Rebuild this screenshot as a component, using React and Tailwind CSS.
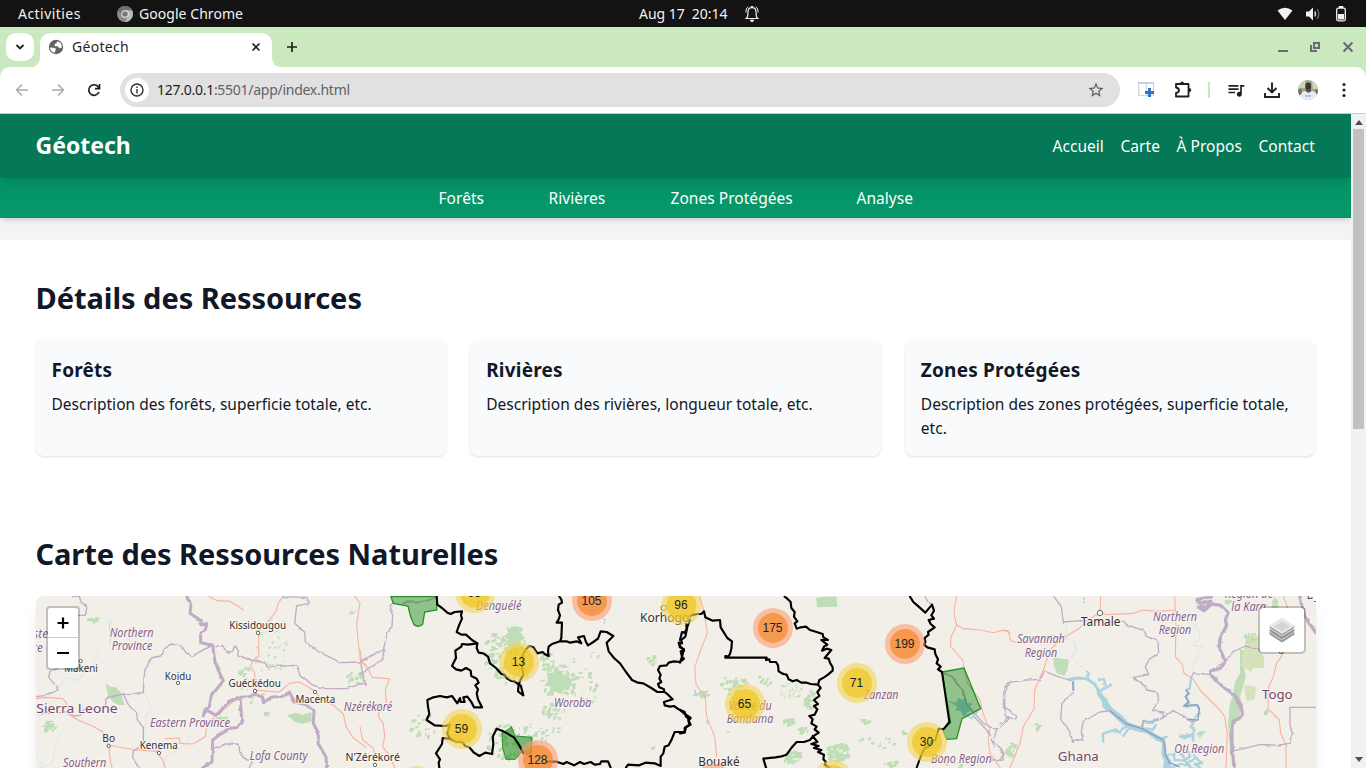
import React from "react";
import { MdStarBorder, MdQueueMusic } from "react-icons/md";

const Stroke = ({ d, c, w, o = 1, f = "none", rough = false }) => (
  <path d={d} stroke={c} strokeWidth={w} opacity={o} fill={f} strokeLinejoin="round" strokeLinecap="round" filter={rough ? "url(#rough)" : undefined} />
);

function TopBar() {
  return (
    <div className="flex h-[27px] shrink-0 items-center bg-[#131313] text-[14px] text-[#f2f2f2]">
      <span className="ml-[18px] w-[63px] whitespace-nowrap tracking-[0.450px]">Activities</span>
      <svg className="ml-[36px]" width="16" height="16" viewBox="0 0 16 16">
        <circle cx="8" cy="8" r="8" fill="#8b8b8b" />
        <path d="M8 4.2H15A8 8 0 0 1 8 16L11.3 9.9Z" fill="#b9b9b9" />
        <path d="M1.1 4A8 8 0 0 1 15 4.2H8L4.7 9.9Z" fill="#6f6f6f" />
        <circle cx="8" cy="8" r="3.8" fill="#eee" />
        <circle cx="8" cy="8" r="2.8" fill="#777" />
      </svg>
      <span className="ml-[6px] w-[106px] whitespace-nowrap tracking-[0.050px]">Google Chrome</span>
      <span className="ml-[394px] w-[90px] whitespace-pre tracking-[-0.040px]">Aug 17  20:14</span>
      <svg className="ml-[15px]" width="16" height="18" viewBox="0 0 16 18" fill="none" stroke="#eee">
        <path d="M2.3 13.5C4.5 12 3.7 9 4 6.5C4.2 4 5.5 2.7 8 2.7S11.800 4 12 6.500C12.300 9 11.500 12 13.700 13.500Z" strokeWidth="1.200" />
        <path d="M2 7.500C1.800 4.800 2.600 2.900 4.200 1.700M14 7.500C14.200 4.800 13.400 2.900 11.800 1.700M7 2.500V1.500H9V2.500" strokeWidth="1" />
        <path d="M6.500 15H9.500L9 16.500H7Z" fill="#eee" />
      </svg>
      <svg className="ml-[517px]" width="16" height="16" viewBox="0 0 16 16" fill="#f2f2f2">
        <path d="M.5 4.500Q8 -1 15.500 4.500L8 14Z" />
      </svg>
      <svg className="ml-[12px]" width="16" height="16" viewBox="0 0 16 16">
        <path d="M1 5.500H4L8 1.500V14.500L4 10.500H1Z" fill="#f2f2f2" />
        <path d="M9.700 5.500Q11.500 8 9.700 10.500" fill="none" stroke="#ddd" strokeWidth="1.300" />
        <path d="M12 3Q15.700 8 12 13" fill="none" stroke="#777" strokeWidth="1.200" />
      </svg>
      <svg className="ml-[13px]" width="16" height="16" viewBox="0 0 16 16">
        <rect x="2.700" y="2.200" width="8.600" height="12.600" rx="1.500" fill="none" stroke="#f2f2f2" strokeWidth="1.300" />
        <rect x="4.800" y="0" width="4.500" height="2" fill="#f2f2f2" />
        <rect x="4" y="8" width="6" height="5.500" fill="#f2f2f2" />
      </svg>
    </div>
  );
}

function TabStrip() {
  return (
    <div className="flex h-10 shrink-0 bg-[#cae9be]">
      <div className="ml-[6px] mt-[6px] flex h-7 w-7 items-center justify-center rounded-[10px] bg-white">
        <svg width="10" height="8" viewBox="0 0 10 8" fill="none" stroke="#1f1f1f" strokeWidth="1.800"><path d="M1.500 2L5 5.500L8.500 2" /></svg>
      </div>
      <svg className="mt-auto" width="6" height="10" viewBox="0 0 6 10"><path d="M6 0Q6 7 0 10H6Z" fill="#fff" /></svg>
      <div className="mt-[6px] flex h-[34px] w-[232px] items-center rounded-t-[10px] bg-white pb-[6px] pl-2 text-[14px] text-[#1f1f1f]">
        <svg width="16" height="16" viewBox="0 0 16 16">
          <circle cx="8" cy="8" r="7.200" fill="#5f6368" />
          <path d="M1.900 8.500L5.500 8.800L7.800 9.400L7.600 11.300L6.500 13.700Q2.300 12.500 1.900 8.500ZM9.500 2.300L8.300 4.300L6.600 4.900L6.800 7.200L10.100 7.300L11.100 9.200L13.900 8.400Q14.200 3.800 9.500 2.300Z" fill="#fff" />
        </svg>
        <span className="relative -top-px ml-2 w-[57px] whitespace-nowrap tracking-[0.300px]">Géotech</span>
        <svg className="ml-[122px]" width="10" height="10" viewBox="0 0 10 10" stroke="#1f1f1f" strokeWidth="1.600"><path d="M1.500 1.500L8.500 8.500M8.500 1.500L1.500 8.500" /></svg>
      </div>
      <svg className="mt-auto" width="10" height="10" viewBox="0 0 10 10"><path d="M0 0Q0 10 10 10H0Z" fill="#fff" /></svg>
      <svg className="ml-[4px] mt-[14px]" width="12" height="12" viewBox="0 0 12 12" stroke="#1f1f1f" strokeWidth="1.700"><path d="M6 1V11M1 6H11" /></svg>
      <svg className="ml-auto mr-[7px] mt-[14px]" width="84" height="14" viewBox="0 0 84 14" fill="none" stroke="#6b6870">
        <path d="M3 10H13" strokeWidth="2" />
        <rect x="39" y="2" width="5" height="5" strokeWidth="2" />
        <path d="M36 4V10H42" strokeWidth="2" />
        <path d="M68.500 1.500L77.500 10.500M77.500 1.500L68.500 10.500" strokeWidth="2" />
      </svg>
    </div>
  );
}

function Toolbar() {
  return (
    <div className="h-[47px] shrink-0 bg-[#cae9be]">
      <div className="flex h-full items-center rounded-t-[10px] border-b border-[#c9ccce] bg-white">
        <svg className="ml-[15px]" width="14" height="14" viewBox="0 0 14 14" fill="none" stroke="#a9a9a9" strokeWidth="1.500"><path d="M13 7H2M7 1.500L1.500 7L7 12.500" /></svg>
        <svg className="ml-[22px]" width="14" height="14" viewBox="0 0 14 14" fill="none" stroke="#a9a9a9" strokeWidth="1.500"><path d="M1 7H12M7 1.500L12.500 7L7 12.500" /></svg>
        <svg className="ml-[22px]" width="14" height="14" viewBox="0 0 14 14" fill="none" stroke="#1f1f1f" strokeWidth="1.700"><path d="M12 9A5.300 5.300 0 1 1 11.200 3.700L12.300 5.300M12.500 1V5.700H8" /></svg>
        <div className="ml-[19px] flex h-[34px] w-[1000px] items-center rounded-full bg-[#e1e1e1] pl-[5px] pr-[15px]">
          <div className="flex h-6 w-6 items-center justify-center rounded-full bg-white">
            <svg width="14" height="14" viewBox="0 0 14 14"><circle cx="7" cy="7" r="6" fill="none" stroke="#303030" strokeWidth="1.400" /><path d="M6.300 3.500H7.700V5H6.300ZM6.300 6H7.700V10.500H6.300Z" fill="#303030" /></svg>
          </div>
          <span className="relative -top-px ml-2 whitespace-nowrap text-[14px] tracking-[-0.270px] text-[#5f6368]"><span className="text-[#1f1f1f]">127.0.0.1</span>:5501/app/index.html</span>
          <MdStarBorder className="ml-auto text-[#5f5f5f]" size={18} />
        </div>
        <svg className="ml-[18px]" width="18" height="18" viewBox="0 0 18 18">
          <path d="M.7 2.500V14.500H15.500V2.500M8.500 3V14.500" fill="none" stroke="#d3d3d6" strokeWidth="1.200" />
          <path d="M0 2H16" stroke="#b9c3e0" strokeWidth="1.600" />
          <path d="M11.500 7V16M7 11.500H16" stroke="#2d75bf" strokeWidth="3" />
        </svg>
        <svg className="ml-[18px]" width="18" height="18" viewBox="0 0 18 18">
          <path d="M2 3H14.500V15.500H2V12Q5 11.500 5 9.300T2 6.500Z" fill="none" stroke="#1f1f1f" strokeWidth="1.800" strokeLinejoin="round" />
          <path d="M6 3Q6 .5 8 .5T10 3ZM15 7Q17.300 7 17.300 9T15 11Z" fill="#1f1f1f" />
        </svg>
        <div className="ml-[16px] h-4 w-[2px] bg-[#c9e8bd]" />
        <MdQueueMusic className="ml-[16px] text-[#1f1f1f]" size={20} />
        <svg className="ml-[17px]" width="18" height="18" viewBox="0 0 18 18" fill="none" stroke="#1f1f1f" strokeWidth="1.900"><path d="M9 1.500V11M4.500 7L9 11.500L13.500 7M2 12V16H16V12" /></svg>
        <svg className="ml-[17px]" width="20" height="20" viewBox="0 0 20 20">
          <defs><clipPath id="av"><circle cx="10" cy="10" r="10" /></clipPath></defs>
          <g clipPath="url(#av)">
            <rect width="20" height="20" fill="#9dab84" />
            <path d="M0 0H7V8H0ZM14 2H20V9H15Z" fill="#cbd5bc" />
            <path d="M2 14Q5 10 10 11.500Q15 10 18 13L19 20H1Z" fill="#e2ecf6" />
            <rect x="7.500" y="2.500" width="5.500" height="8" rx="2.700" fill="#403334" />
            <path d="M8 9H12.500L13.500 11L10.500 13L7.500 11Z" fill="#5d4b4a" />
            <path d="M0 10L3 9L4 13L1 16ZM17 9L20 10V14L18 13Z" fill="#7b685c" />
            <path d="M7 16H13" stroke="#8296b8" strokeWidth="1" />
          </g>
        </svg>
        <svg className="ml-[24px]" width="4" height="16" viewBox="0 0 4 16" fill="#1f1f1f"><circle cx="2" cy="2.500" r="1.600" /><circle cx="2" cy="8" r="1.600" /><circle cx="2" cy="13.500" r="1.600" /></svg>
      </div>
    </div>
  );
}

const PURPLE = "#c0acc4";
const GREEN = "#bfdeb7";
const ROAD = "#fab29e";
const WATER = "#aad3df";

const Label = ({ x, y, s = 36, kind = "region", w, children }) => (
  <text
    x={x}
    y={y}
    fontSize={s}
    textAnchor="middle"
    textLength={w}
    lengthAdjust="spacingAndGlyphs"
    fontStyle={kind === "region" ? "italic" : "normal"}
    fill={kind === "town" ? "#303030" : kind === "country" ? "#71476f" : "#855f8b"}
    stroke="#f8f5f1"
    strokeWidth="6"
    strokeLinejoin="round"
    paintOrder="stroke"
  >
    {children}
  </text>
);
const Town = ({ x, y, r = 5 }) => <circle cx={x} cy={y} r={r} fill="#fff" stroke="#6a665f" strokeWidth="3" />;

/* Repeatable speckle of small woodland patches inside an ellipse. */
function Woods({ x, y, rx, ry, n, s = 7, seed = 1 }) {
  let v = seed * 791947 + 1234567;
  const rnd = () => ((v = (v * 16807) % 2147483647) / 2147483647);
  rnd();
  let d = "";
  for (let i = 0; i < n; i++) {
    const a = rnd() * 6.283, q = Math.sqrt(rnd());
    const px = x + Math.cos(a) * q * rx, py = y + Math.sin(a) * q * ry;
    const w = s * (0.4 + rnd()), h = s * (0.3 + rnd());
    d += `M${px.toFixed(0)} ${py.toFixed(0)}h${w.toFixed(0)}v${h.toFixed(0)}h${(-w / 2).toFixed(0)}v${(h / 2).toFixed(0)}h${(-w).toFixed(0)}v${(-h).toFixed(0)}z`;
  }
  return <path d={d} fill={GREEN} />;
}

function West() {
  return (
    <g transform="translate(0 -6) scale(.33333)">
      <path d="M210 280L222 290L240 292L256 310L266 345L250 346L234 338L218 322L212 300Z" fill={GREEN} />
      <path d="M752 376L780 368L800 374L826 366L828 394L800 402L778 396Z" fill={GREEN} />
      <path d="M684 366H700V379H684Z" fill={GREEN} />
      <Woods x={172} y={86} rx={16} ry={6} n={8} />
      <Woods x={40} y={406} rx={18} ry={16} n={34} s={6} seed={4} />
      <Woods x={700} y={170} rx={55} ry={85} n={60} s={4} seed={5} />
      <Woods x={625} y={240} rx={18} ry={12} n={12} seed={6} s={6} />
      <Woods x={560} y={384} rx={22} ry={10} n={14} s={7} seed={8} />
      <Woods x={640} y={295} rx={45} ry={45} n={12} s={6} seed={18} />
      <Woods x={960} y={260} rx={28} ry={18} n={18} s={7} seed={9} />
      <Woods x={955} y={65} rx={25} ry={8} n={8} s={5} seed={10} />
      <Stroke d="M190 180L175 215L150 245L130 270L90 262L65 300M150 245L90 300M328 310L345 350L330 380L325 430M470 430L440 470L390 500L380 533M100 400L70 430L48 520L15 533M0 505L22 525L16 533" c="#d6e5e8" w={2.500} />
      <Stroke d="M224 92L220 115L226 138L221 160" c="#bcdce6" w={3} />
      <Stroke d="M520 20L545 32L580 34L605 48L622 60M740 20L726 42L720 64L705 84L690 100L668 125L668 200L650 212L644 230L656 250L657 300L700 304L730 306L760 280L790 276L836 302L850 320L895 348L922 372L930 410L952 444L991 472M0 326L30 322L80 326L92 340L95 372L130 392L170 408L200 425L218 466L300 480L360 484L380 510L388 533M218 466L222 505L228 533M300 480L348 474L370 484M388 446L430 444L432 460L470 462L508 440L512 408L534 380L575 350L604 322M957 20L972 40L962 100L966 150L974 215L990 225" c={ROAD} w={3.300} />
      <Stroke d="M110 20L130 18L134 38L150 44L152 55L148 76H130M64 236L42 244L38 262L54 280L66 300L32 316L0 320M208 344L216 322L262 312L322 308L326 242L346 204L374 198L386 176L404 162L428 166L468 200L498 182L530 164M262 312L280 350L300 366L310 400L322 412V462L292 484L290 504L308 533M540 170L560 166L570 186L590 184L595 168L608 182L605 196L648 210L690 220L696 230L780 226L795 260L830 285L870 296L930 296L990 278M740 20L812 22L820 40L782 48L776 100L806 126L808 156L850 186L914 218L974 216L990 206M530 476L570 462L606 462L608 486L630 510L650 512L640 533M0 368L20 372L50 364L98 366L112 378L130 376L150 350" c={PURPLE} w={4} rough />
      <Stroke d="M452 20L466 40L462 70L480 82L494 92L496 105L512 100L508 120L494 134V158L530 166L538 222L562 272L526 318L520 350L506 360L502 378L512 360L540 376L576 338L612 322L618 398L606 412L576 416L530 450L528 516L500 533M604 322L640 320L662 312L680 322L682 338L706 322L750 318L760 306L776 336L810 344L834 360L832 400L848 430L846 460L870 500L872 533" c={PURPLE} w={9} rough />
      <Label x={14} y={144}>ste</Label><Label x={4} y={185}>ce</Label>
      <Label x={287} y={141} w={132}>Northern</Label><Label x={288} y={180} w={122}>Province</Label>
      <Label x={462} y={412} w={240}>Eastern Province</Label><Label x={146} y={530} w={130}>Southern</Label>
      <Label x={728} y={511} w={174}>Lofa County</Label>
      <Label x={123} y={369} s={40} kind="country" w={244}>Sierra Leone</Label>
      <Label x={665} y={117} s={32} kind="town" w={170}>Kissidougou</Label><Town x={666} y={129} />
      <Label x={135} y={246} s={32} kind="town" w={101}>Makeni</Label><Town x={134} y={213} />
      <Label x={426} y={269} s={32} kind="town" w={79}>Koidu</Label><Town x={426} y={279} />
      <Label x={656} y={291} s={32} kind="town" w={157}>Guéckédou</Label><Town x={657} y={303} />
      <Label x={838} y={340} s={32} kind="town" w={119}>Macenta</Label><Town x={837} y={306} />
      <Label x={218} y={457} s={32} kind="town" w={38}>Bo</Label><Town x={218} y={468} />
      <Label x={368} y={476} s={32} kind="town" w={114}>Kenema</Label><Town x={369} y={489} />
    </g>
  );
}

function Centre() {
  return (
    <g transform="translate(324 -6) scale(.33333)">
      <path d="M440 108L450 118L462 108L478 112L476 128L490 140L480 158L486 176L466 170L450 180L442 164L446 146L430 140L444 130ZM560 250L580 248L584 238L600 240L612 258L630 262L636 280L626 296L610 300L602 312L584 304L570 306L572 290L556 286L564 270Z" fill={GREEN} />
      <Woods x={458} y={145} rx={38} ry={42} n={45} seed={2} />
      <Woods x={410} y={185} rx={40} ry={60} n={46} seed={3} />
      <Woods x={450} y={250} rx={50} ry={32} n={22} seed={23} />
      <Woods x={595} y={270} rx={50} ry={52} n={75} seed={4} />
      <Woods x={560} y={215} rx={28} ry={28} n={24} seed={14} />
      <Woods x={670} y={290} rx={42} ry={56} n={22} seed={5} />
      <Woods x={585} y={352} rx={42} ry={32} n={28} seed={6} />
      <Woods x={440} y={450} rx={65} ry={55} n={45} seed={7} />
      <Woods x={530} y={425} rx={70} ry={38} n={26} seed={17} />
      <Woods x={190} y={400} rx={38} ry={52} n={16} seed={8} />
      <Woods x={876} y={206} rx={14} ry={14} n={10} seed={9} />
      <Woods x={880} y={470} rx={8} ry={4} n={4} seed={10} />
      <Woods x={690} y={220} rx={55} ry={40} n={7} seed={15} />
      <Stroke d="M730 88h8M733 92v10" c={WATER} w={3} />
      <Stroke d="M100 38L90 48L98 70L96 110L82 130L76 154L70 180L30 200L2 214L6 240L14 270L18 284M74 180L68 206L30 235L5 246M125 46L140 36L190 36L230 22" c={PURPLE} w={4} rough />
      <Stroke d="M0 180L6 215L26 238L36 262L88 266L76 300L80 342L58 350L56 382L70 400L74 440L68 470L90 500L104 533M0 410L8 450L40 474L46 520" c={ROAD} w={3.300} />
      <Label x={416} y={60} w={136}>Denguélé</Label>
      <Label x={638} y={352} w={112}>Woroba</Label>
      <Label x={24} y={362} w={146}>Nzérékoré</Label>
      <Label x={38} y={513} s={32} kind="town" w={163}>N'Zérékoré</Label><Town x={45} y={525} />
      <Label x={914} y={97} s={36} kind="town" w={148}>Korhogo</Label><Town x={911} y={54} r={8} />
      <path d="M93 20L100 40L144 48L152 80L162 104Q176 114 188 103L194 66L230 60V20Z" fill="#008000" fillOpacity=".4" stroke="#269326" strokeWidth="4" />
      <path d="M426 428L442 420L454 410L466 438L516 442L514 490L500 494L490 480L466 508L438 508L428 474Z" fill="#008000" fillOpacity=".5" stroke="#269326" strokeWidth="3" />
      <Stroke d="M230 20L232 44L246 54L262 68L272 72L284 66L306 64L303 76L306 86L298 104L290 126L304 134L318 134L336 150L352 160L350 174L356 188L370 190L384 200L390 220L408 234L424 252L434 254L440 264L452 272L464 274L476 284L482 268L490 256L486 230L490 214L486 200L498 178L508 168L520 172L532 190L548 186L554 192L566 198L564 184L566 170L576 162L600 154M476 284L474 304L490 316L482 286M600 154L604 144L606 98L590 98L596 88L600 76L594 60L596 44L606 38L604 28L598 20M600 154L620 154L630 158L650 154L664 160L654 142L672 138L678 156L684 166L700 156L714 146L722 124L740 126L760 138L740 158L746 184L762 204L780 220L798 246L816 270L834 278L850 280L874 294L892 306H914L924 314L938 328L912 336L914 346L930 350L942 348L956 358L974 366L978 380L984 384L988 404L974 414V426L944 426L936 446L926 466L914 470L910 490L902 500V528L884 520L856 518L838 526L804 524L798 533" c="#000" w={6.500} />
      <Stroke d="M990 90L982 110L976 140L964 150L966 160L956 158L960 172L972 178L966 200L972 206L960 216L942 214L926 218L920 226L900 228L894 240L902 254L898 266L904 276L894 282L898 292L912 298V306M352 160L324 164L306 162L304 170L286 182L288 204L276 228L288 238L304 242L318 234L332 242L334 258L350 266L356 278L346 286L354 298L350 310L354 328L366 352H342L334 336L322 320L310 322L314 336L302 336L300 324L292 340L276 318L260 322L240 318L220 322L202 330L204 350L208 372L200 390L224 406L256 408L270 404L262 430L270 446L290 456H306L316 468L328 472L342 488L358 498L376 488L396 492L400 462L398 440L410 416L430 424L462 442L478 466L490 490M268 446L248 444L246 462L228 490L240 508L236 518L238 533M560 515L590 515L610 522L620 516L642 526L660 516L672 522L692 516L704 524L720 522L724 514L744 514L752 533" c="#000" w={6.500} />
    </g>
  );
}

function East() {
  return (
    <g transform="translate(644 -6) scale(.33333)">
      <path d="M408 24L430 20H470L472 50L412 52Z" fill={GREEN} />
      <Woods x={175} y={275} rx={28} ry={14} n={24} seed={1} />
      <Woods x={70} y={306} rx={14} ry={14} n={14} seed={2} />
      <Woods x={150} y={290} rx={30} ry={20} n={9} seed={3} />
      <Woods x={250} y={270} rx={22} ry={20} n={9} seed={4} />
      <Woods x={330} y={300} rx={38} ry={25} n={60} s={3} seed={5} />
      <Woods x={390} y={325} rx={18} ry={28} n={24} seed={6} />
      <Woods x={325} y={390} rx={16} ry={10} n={16} seed={7} />
      <Woods x={370} y={415} rx={14} ry={10} n={10} seed={8} />
      <Woods x={335} y={498} rx={28} ry={18} n={45} seed={9} />
      <Woods x={475} y={485} rx={36} ry={28} n={85} seed={10} />
      <Woods x={552} y={390} rx={14} ry={5} n={7} seed={11} />
      <Woods x={590} y={458} rx={70} ry={20} n={14} s={6} seed={12} />
      <Woods x={670} y={425} rx={10} ry={5} n={5} seed={13} />
      <Woods x={640} y={520} rx={28} ry={8} n={10} seed={14} />
      <Woods x={840} y={520} rx={50} ry={12} n={14} seed={15} />
      <Woods x={120} y={320} rx={70} ry={120} n={9} s={6} seed={16} />
      <Stroke d="M60 20L72 66L82 130L62 180L44 232L48 284L76 322L80 380L104 440L110 500M830 20L822 60L824 82L830 104L812 144V170L848 210L854 244L862 280L900 330L908 365L920 400L930 414L924 450L930 490L960 533M830 104L850 116L900 120L940 128L970 120L990 128" c={ROAD} w={3.300} />
      <Stroke d="M735 20L748 38L758 44M786 246L816 260L830 280L850 302L858 340L884 370L910 400L928 410L950 418L940 455L960 470L972 490L966 510L932 514M950 418L990 386M990 386L975 378L974 310L990 274M878 376L920 420L944 470" c={PURPLE} w={4} rough />
      <Stroke d="M44 302L50 316L42 316M856 372L876 386L892 366" c={WATER} w={5} />
      <Label x={210} y={359} w={130}>Vallée du</Label><Label x={210} y={398} w={140}>Bandama</Label>
      <Label x={603} y={328} w={104}>Zanzan</Label><Label x={844} y={518} w={182}>Bono Region</Label>
      <Label x={117} y={527} s={36} kind="town" w={124}>Bouaké</Label>
      <path d="M786 246L852 234L902 356L846 386L830 446L800 448L788 420L812 398Z" fill="#008000" fillOpacity=".4" stroke="#269326" strokeWidth="4" />
      <path d="M804 332L828 338L836 324L850 330L856 318L862 338L880 342L866 350L874 362L860 368L850 380L842 362L826 362L832 350Z" fill="#4f9e86" opacity=".75" />
      <Stroke d="M786 246L816 260L830 280L850 302L858 340L884 370" c="#648a68" w={4} o={0.700} />
      <Stroke d="M0 150L6 126L14 128L20 116L18 96L32 76L52 72L64 72L72 64L76 82L98 92L120 90L122 112L142 144L156 154L154 176L150 192L144 200L136 198V203H260L258 210L268 208L270 216H288L294 226L296 244L310 252L320 254L326 268L338 274L350 270L364 278L380 278L392 282L414 284L418 270L432 262L444 254L458 242V232L450 218L446 206L434 204L454 180L440 176L426 182L432 170L442 164L424 150L444 150L430 142L428 132L410 126L390 120L378 110L362 112L350 116L344 100L352 94L342 80L344 66L334 54L332 36L322 26L314 20M0 168L12 182L2 184L6 200L0 218M0 360L12 370L32 384L26 392L32 404L18 412L14 428L0 430M414 284L422 294L412 306L418 318L402 330L414 342L402 348L412 358L404 374L388 378L398 388L394 400L410 410L404 418L416 428L398 440L390 450L372 456L350 456L334 474L320 494L300 500L286 502L250 506L258 533M398 438L412 456L394 462L416 468L402 474L424 480L414 486L432 494L430 508L438 516L434 524L448 533" c="#000" w={6.500} />
      <Stroke d="M690 20L700 36L716 50L736 68L756 44L762 62L754 76L762 86L746 90L752 102L764 112L744 126L746 134L734 144L736 156L732 164L742 172L764 178L766 192L774 208L770 220L782 230L774 238L786 246" c="#000" w={6.500} />
      <Stroke d="M786 246L808 396L790 418L776 416L766 450L754 454L748 470L734 474L722 500L710 533" c="#000" w={6} />
    </g>
  );
}

function FarEast() {
  return (
    <g transform="translate(964 -6) scale(.33333)">
      <path d="M160 200L184 206L206 208L204 234L194 258L170 250L162 228ZM720 180L730 180L732 230L738 260L720 320L730 352L704 404L684 398L690 340L700 310L704 278L720 250ZM684 400H702V480H690Z" fill={GREEN} />
      <path d="M740 140L778 136V180L792 200V234L762 234L752 246L724 226L730 180ZM732 286L768 290L764 330L740 332Z" fill="#d8e2ba" />
      <Woods x={750} y={135} rx={18} ry={22} n={14} seed={2} />
      <Woods x={825} y={38} rx={6} ry={16} n={18} seed={3} />
      <Woods x={680} y={30} rx={10} ry={5} n={7} seed={4} />
      <Woods x={108} y={406} rx={10} ry={8} n={7} seed={5} />
      <Woods x={34} y={475} rx={18} ry={20} n={20} seed={6} />
      <Woods x={600} y={430} rx={12} ry={12} n={9} s={6} seed={7} />
      <Woods x={798} y={360} rx={4} ry={4} n={4} seed={8} />
      <Stroke d="M200 110L194 140L222 160L230 185L214 200L244 232L262 250M590 94L584 110L600 130L596 150L580 166L608 172L590 190L592 208L580 220L580 250" c="#d4e5ea" w={3} rough />
      <Stroke d="M302 20L300 68L258 92L240 114L186 146L150 180L132 235L104 300L102 356L70 410L60 460L30 533M300 68L320 74L400 70L430 60L466 64L526 60M524 20L528 100L526 200L546 222L552 250L580 268L600 300L660 360L674 380L682 430L678 533M0 122H24L32 152L60 160L150 135L180 140M850 20L862 50L850 190L830 220L820 260L806 290L804 356L838 390L842 430L858 466V533" c={ROAD} w={3.300} />
      <Stroke d="M208 268L230 264L260 266L284 282L300 308L320 340L350 376" c={WATER} w={9} />
      <path d="M290 296L304 312L320 326L332 350L350 364L366 376L384 396L410 406L440 414L462 430L490 444L498 462L500 494L514 512L512 540H488L492 510L484 490L486 460L462 446L440 430L408 424L376 412L350 388L330 368L308 352L304 332L290 312Z" fill={WATER} />
      <Stroke d="M300 304L322 292L334 284M318 292L312 268L300 268M322 292L308 284M262 246L264 268M220 272V300M374 410L360 426L332 420L308 436L310 456M344 426L360 432M390 410L370 438M424 412L430 396L458 400L462 390M440 416L458 420L468 402M490 500L520 490L524 510L560 512L540 490M500 440L470 450M510 533L544 522L580 533M580 400L572 410L584 420L572 434L540 440L556 444L580 436V452M562 480L570 500L552 510L572 530M580 470L584 500L606 520L584 522L600 533M590 505L560 520M574 262L570 290L558 304L568 310L558 320L566 336L552 348L594 346L596 370L580 390L566 388" c={WATER} w={7} rough />
      <Stroke d="M558 300L566 310L556 320L566 336L552 348L590 344L598 354L594 390L565 388M218 276L220 300M330 362L352 380L380 402L426 416L470 440L492 452L496 494L508 518L538 530" c="#8e9bbb" w={4} />
      <Stroke d="M162 20L184 50L190 96L240 92L372 94L380 104L430 122L440 140L474 152L476 188L448 208L436 230L446 254L400 262L436 286L440 300L472 306L476 330L458 362L488 366L490 382L462 394L430 394L428 412M490 382L520 362L560 384L574 396L592 390M574 262L580 248L632 254M632 240L672 218L700 184L740 168L778 180M0 402L24 380L46 390L50 378L30 364L10 345L12 290L24 278L80 270L120 268L134 244L180 262L210 272M220 308L186 340L182 388L212 428L218 456L248 448L244 424L250 394L300 366L330 362M876 430L868 460L830 466L800 464L780 464L704 482M0 480L10 490L0 512" c={PURPLE} w={4} rough />
      <Stroke d="M948 352H870V402L876 430" c={PURPLE} w={4} />
      <Stroke d="M634 20L594 28L602 42L630 34L622 50L596 52L612 62L636 42L662 46L684 68L676 90L680 106L660 146L658 170L668 196L674 216L664 234L636 242L632 252L650 276L704 316L720 344L730 376L696 400L694 440L702 533M900 20L906 50L914 80L948 128" c={PURPLE} w={10} rough />
      <Stroke d="M252 24v3M252 34v3" c="#8ccbe5" w={4} />
      <Town x={300} y={69} r={8} /><Town x={843} y={186} />
      <Label x={302} y={109} s={36} kind="town" w={118}>Tamale</Label>
      <Label x={123} y={160} w={143}>Savannah</Label><Label x={123} y={200} w={98}>Region</Label>
      <Label x={525} y={92} w={132}>Northern</Label><Label x={525} y={131} w={98}>Region</Label>
      <Label x={747} y={25} w={145}>Région de</Label><Label x={746} y={64} w={104}>la Kara</Label>
      <Label x={598} y={489} w={150}>Oti Region</Label>
      <Label x={235} y={513} s={40} kind="country" w={123}>Ghana</Label>
      <Label x={832} y={327} s={40} kind="country" w={92}>Togo</Label>
      <Label x={936} y={27} s={32} kind="town">Dj</Label>
    </g>
  );
}

const CLUSTERS = [
  [439, -3, 93, 0], [556, 5, 105, 1], [645.5, 9, 96, 0], [737, 32, 175, 1], [869, 48, 199, 1],
  [483, 66, 13, 0], [821, 87, 71, 0], [709, 108, 65, 0], [426, 133, 59, 0], [891, 146, 30, 0],
  [502, 164, 128, 1], [797, 184, 85, 0], [677, 188, 112, 1], [381, 190, 24, 0],
];

function Map() {
  return (
    <div className="relative h-[500px] overflow-hidden rounded-lg bg-[#f2efe9] shadow-lg">
      <svg className="block" width="1280" height="172" viewBox="0 0 1280 172" fontFamily="Noto Sans, sans-serif">
        <defs>
          <filter id="rough" filterUnits="userSpaceOnUse" x="-20" y="-20" width="1200" height="600" colorInterpolationFilters="sRGB">
            <feTurbulence type="fractalNoise" baseFrequency=".05" numOctaves="1" seed="3" />
            <feDisplacementMap in="SourceGraphic" scale="10" xChannelSelector="R" yChannelSelector="G" />
          </filter>
        </defs>
        <West />
        <FarEast />
        <East />
        <Centre />
        {CLUSTERS.map(([x, y, n, hot]) => (
          <g key={n}>
            <circle cx={x} cy={y} r="20" fill={hot ? "#fd9c73" : "#f1d357"} opacity=".6" />
            <circle cx={x} cy={y} r="15" fill={hot ? "#f18017" : "#f0c20c"} opacity=".6" />
            <text x={x - 0.5} y={y + 4} fontSize="12" textAnchor="middle" fontFamily="Liberation Sans, Arial, sans-serif" fill="#222">{n}</text>
          </g>
        ))}
      </svg>
      <div className="absolute left-[10px] top-[10px] flex w-[34px] flex-col rounded-[4px] border-2 border-black/20 bg-white bg-clip-padding">
        <span className="flex h-[30px] items-center justify-center border-b border-[#ccc] pt-px">
          <svg width="12" height="12" viewBox="0 0 12 12" stroke="#000" strokeWidth="2.200"><path d="M6 .5V11.500M.5 6H11.500" /></svg>
        </span>
        <span className="flex h-[30px] items-center justify-center">
          <svg width="12" height="12" viewBox="0 0 12 12" stroke="#000" strokeWidth="2.200"><path d="M0 6H12" /></svg>
        </span>
      </div>
      <div className="absolute right-[10px] top-[10px] flex h-12 w-12 items-center justify-center rounded-[5px] border-2 border-black/20 bg-white bg-clip-padding">
        <svg width="26" height="26" viewBox="0 0 26 26">
          <path d="M0 17L13 8.500L26 17L13 25.500Z" fill="#8b8b8b" />
          <path d="M0 15.500L13 7L26 15.500L13 24Z" fill="#b9b9b9" />
          <path d="M0 13.500L13 5L26 13.500L13 21.500Z" fill="#858585" />
          <path d="M0 12L13 3.500L26 12L13 20Z" fill="#c8c8c8" />
          <path d="M0 10L13 1.500L26 10L13 18Z" fill="#8f8f8f" />
          <path d="M0 9L13 .5L26 9L13 17Z" fill="#e8e8e8" />
          <path d="M5 9.500L13 4.500L21 9.500L13 14.500Z" fill="#d4d4d4" />
        </svg>
      </div>
    </div>
  );
}

const Card = ({ title, children }) => (
  <div className="rounded-lg bg-[#f9fafb] p-4 shadow-[0_1px_3px_rgba(0,0,0,0.1),0_1px_2px_-1px_rgba(0,0,0,0.1)]">
    <h3 className="mb-2 whitespace-nowrap text-[19px] font-bold leading-7 tracking-[0.200px]">{title}</h3>
    <p className="text-[15.5px] leading-6 tracking-[0.020px]">{children}</p>
  </div>
);

function Page() {
  return (
    <div className="min-w-0 flex-1 overflow-hidden bg-[#f3f4f6] text-[#111827]">
      <header className="relative z-10 h-16 bg-[#047857] text-white shadow-lg">
        <div className="mx-auto flex h-full w-[1280px] items-center justify-between pb-[2px]">
          <h1 className="text-[23px] font-bold leading-8">Géotech</h1>
          <nav className="flex gap-4 whitespace-nowrap pt-[2px] text-[15.5px] leading-6 tracking-[0.040px]">
            <a className="w-[52px]">Accueil</a><a className="w-10">Carte</a><a className="w-[66px]">À Propos</a><a className="w-[57px]">Contact</a>
          </nav>
        </div>
      </header>
      <nav className="flex h-10 justify-center gap-16 whitespace-nowrap bg-[#059669] py-2 text-[15.5px] leading-6 tracking-[0.040px] text-white shadow-md">
        <a className="w-[46px]">Forêts</a><a className="w-[58px]">Rivières</a><a className="w-[122px]">Zones Protégées</a><a className="w-[56px]">Analyse</a>
      </nav>
      <main className="mt-[22px] bg-white">
        <section className="mx-auto w-[1280px] py-10">
          <h2 className="mb-6 text-[29px] font-bold leading-9 tracking-[-0.040px]">Détails des Ressources</h2>
          <div className="grid h-[116px] grid-cols-3 gap-6">
            <Card title="Forêts">Description des forêts, superficie totale, etc.</Card>
            <Card title="Rivières">Description des rivières, longueur totale, etc.</Card>
            <Card title="Zones Protégées">Description des zones protégées, superficie totale, etc.</Card>
          </div>
        </section>
        <section className="mx-auto w-[1280px] py-10">
          <h2 className="mb-6 text-[29px] font-bold leading-9 tracking-[-0.060px]">Carte des Ressources Naturelles</h2>
          <Map />
        </section>
      </main>
    </div>
  );
}

export default function App() {
  return (
    <div className="flex h-[768px] w-[1366px] flex-col overflow-hidden bg-white font-['Noto_Sans',sans-serif]">
      <TopBar />
      <TabStrip />
      <Toolbar />
      <div className="flex min-h-0 flex-1">
        <Page />
        <div className="flex w-[15px] flex-col items-center bg-[#f1f1f1]">
          <svg className="mt-[6px] shrink-0" width="8" height="5" viewBox="0 0 8 5"><path d="M0 5L4 0L8 5Z" fill="#505050" /></svg>
          <div className="mt-[4px] h-[300px] w-[11px] bg-[#c1c1c1]" />
          <svg className="mb-[6px] mt-auto shrink-0" width="8" height="5" viewBox="0 0 8 5"><path d="M0 0L4 5L8 0Z" fill="#505050" /></svg>
        </div>
      </div>
    </div>
  );
}
